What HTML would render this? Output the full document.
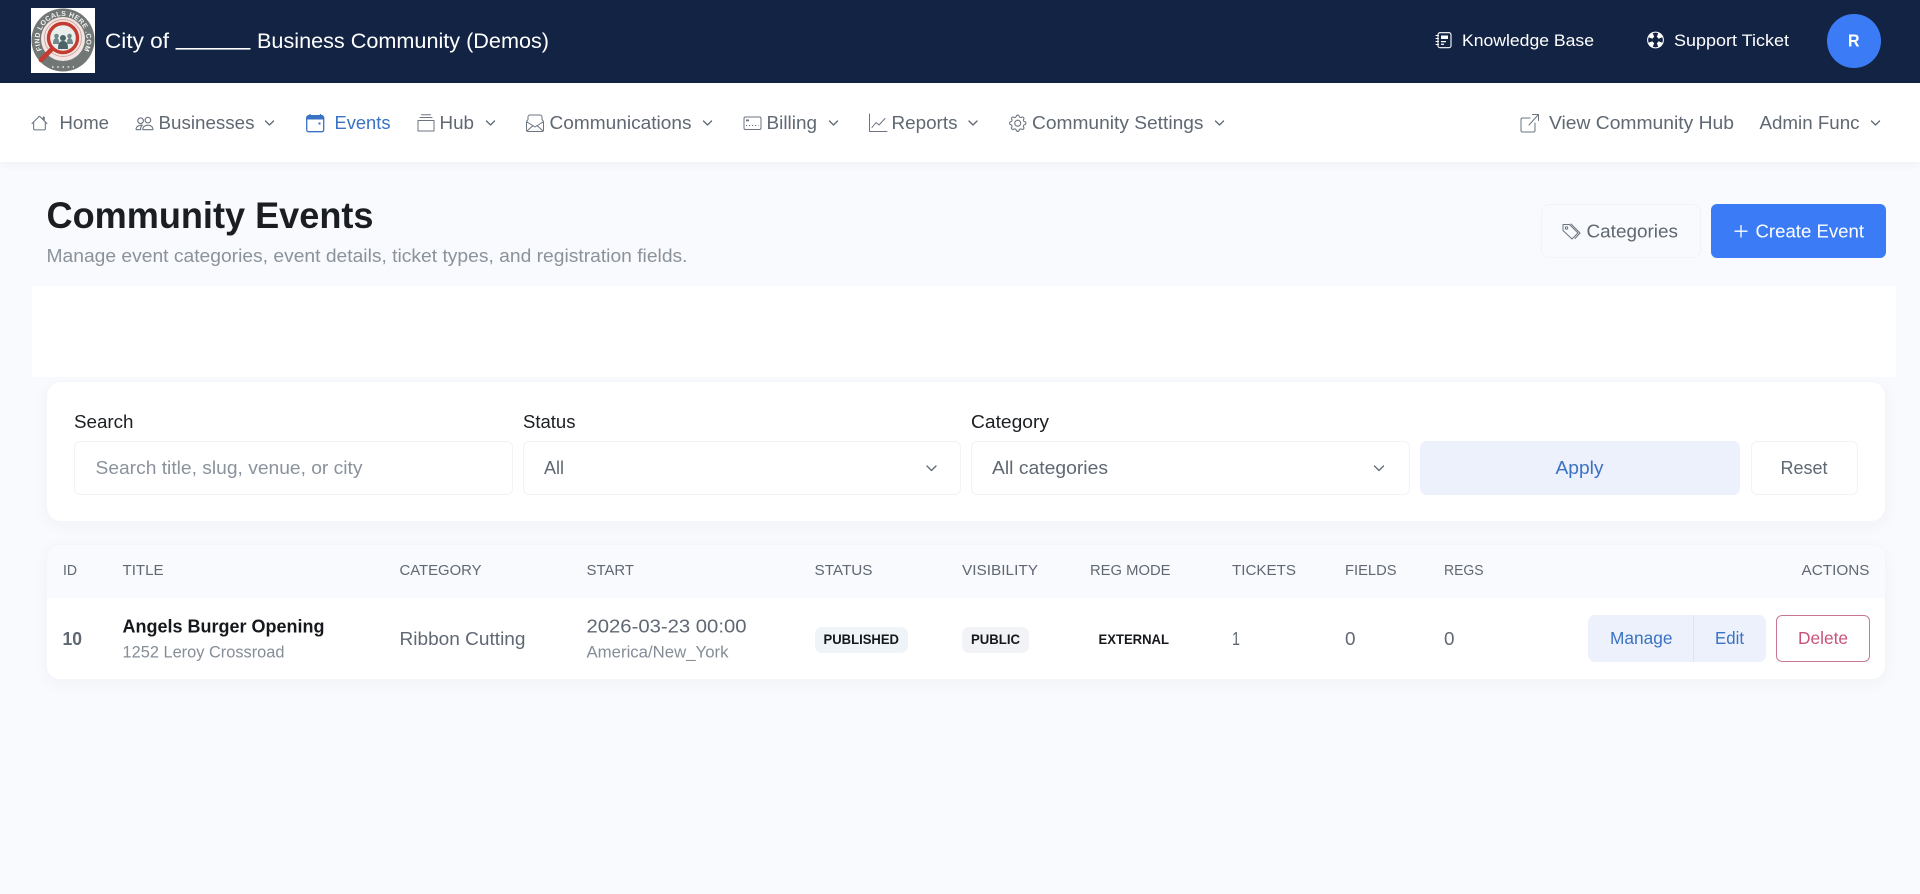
<!DOCTYPE html>
<html lang="en"><head><meta charset="utf-8"><title>Community Events</title>
<style>
html,body{margin:0;padding:0;width:1920px;height:894px;overflow:hidden;background:#f9fafd;font-family:"Liberation Sans",sans-serif}
.b{position:absolute;box-sizing:border-box}
svg.o{position:absolute;left:0;top:0}
text{font-family:"Liberation Sans",sans-serif}
.nav{font-size:18.5px;fill:#5f6873}
.hd{font-size:15.2px;fill:#5f6873}
.t18{font-size:18.5px;fill:#5f6873}
.lb{font-size:18.5px;fill:#1b1e22}
.bd{font-size:14px;font-weight:700;fill:#15181c}
.ic{fill:none;stroke:#6b7480;stroke-width:1;stroke-linecap:round;stroke-linejoin:round}
.ch{fill:none;stroke:#5f6873;stroke-width:1.3;stroke-linecap:round;stroke-linejoin:round}
</style></head><body>
<div class="b" style="left:0;top:0;width:1920px;height:83px;background:#132343"></div>
<div class="b" style="left:0;top:83px;width:1920px;height:79px;background:#fff;box-shadow:0 2px 8px rgba(30,50,90,.05)"></div>
<div class="b" style="left:1827px;top:14px;width:54px;height:54px;border-radius:50%;background:#3b7cf6"></div>
<div class="b" style="left:1541px;top:204px;width:160px;height:54px;border-radius:8px;border:1px solid #f1f3f6;background:#f9fafd"></div>
<div class="b" style="left:1711px;top:204px;width:175px;height:54px;border-radius:6px;background:#3b7cf6"></div>
<div class="b" style="left:32px;top:286px;width:1864px;height:91px;background:#fff"></div>
<div class="b" style="left:46px;top:381px;width:1840px;height:141px;border-radius:15px;background:#fff;border:1px solid #f3f5f9;box-shadow:0 4px 16px rgba(30,50,90,.04)"></div>
<div class="b" style="left:74px;top:441px;width:439px;height:54px;border-radius:6px;border:1px solid #f1f3f6;background:#fff"></div>
<div class="b" style="left:523px;top:441px;width:438px;height:54px;border-radius:6px;border:1px solid #f1f3f6;background:#fff"></div>
<div class="b" style="left:971px;top:441px;width:439px;height:54px;border-radius:6px;border:1px solid #f1f3f6;background:#fff"></div>
<div class="b" style="left:1420px;top:441px;width:320px;height:54px;border-radius:7px;background:#ecf1fb"></div>
<div class="b" style="left:1751px;top:441px;width:107px;height:54px;border-radius:6px;border:1px solid #f1f3f6;background:#fff"></div>
<div class="b" style="left:46px;top:544px;width:1840px;height:136px;border-radius:14px;background:#fff;overflow:hidden;border:1px solid #f3f5f9;box-shadow:0 4px 16px rgba(30,50,90,.04)">
  <div style="height:53px;background:#f9fafd"></div>
</div>
<div class="b" style="left:815px;top:627px;width:93px;height:26px;border-radius:7px;background:#eef4f8"></div>
<div class="b" style="left:962px;top:627px;width:67px;height:26px;border-radius:7px;background:#f1f3f6"></div>
<div class="b" style="left:1588px;top:615px;width:106px;height:47px;border-radius:7px 0 0 7px;background:#ecf1fb;border-right:1px solid #dfe5f0"></div>
<div class="b" style="left:1694px;top:615px;width:72px;height:47px;border-radius:0 7px 7px 0;background:#ecf1fb"></div>
<div class="b" style="left:1776px;top:615px;width:94px;height:47px;border-radius:6px;border:1px solid #c9788f;background:#fff"></div>

<svg class="o" width="1920" height="894" viewBox="0 0 1920 894" xmlns="http://www.w3.org/2000/svg">
<!-- logo -->
<rect x="31" y="8" width="64" height="65" fill="#fff"/>
<circle cx="63" cy="40" r="31.5" fill="#707775"/>
<circle cx="63" cy="39" r="22" fill="#f1e6e3"/>
<circle cx="63" cy="38" r="18.5" fill="none" stroke="#d9a6a0" stroke-width="1"/>
<circle cx="63" cy="38" r="14.5" fill="#e9edec" stroke="#c33b31" stroke-width="3.4"/>
<path d="M52 49 41 60" stroke="#c33b31" stroke-width="4.6" stroke-linecap="round"/>
<circle cx="63" cy="38" r="3" fill="#4b6468"/><path d="M58 49c0-6 1.500-8 5-8s5 2 5 8z" fill="#4b6468"/>
<circle cx="56.500" cy="36" r="2.300" fill="#71888b"/><circle cx="69.500" cy="36" r="2.300" fill="#71888b"/>
<path d="M53 44c0-4 1-6 3.500-6s2.500 2 2.500 6zM67 44c0-4 .5-6 2.500-6s3.500 2 3.500 6z" fill="#71888b"/>
<defs><path id="arc" d="M42 50A23.500 23.500 0 1 1 84 50"/></defs>
<text font-size="7" font-weight="700" fill="#f4f4f2" letter-spacing=".35"><textPath href="#arc">FIND LOCALS HERE .COM</textPath></text>
<path d="M52 67h22" stroke="#e8e8e6" stroke-width="1.600" stroke-dasharray="1.600 3.600"/>

<!-- header text -->
<text x="105" y="48" font-size="21.500" fill="#fff" textLength="64" lengthAdjust="spacingAndGlyphs">City of</text>
<rect x="175.500" y="48" width="75" height="1.600" fill="#fff"/>
<text x="257" y="48" font-size="21.500" fill="#fff" textLength="292" lengthAdjust="spacingAndGlyphs">Business Community (Demos)</text>
<text x="1462" y="46" font-size="16.500" fill="#fff" textLength="132" lengthAdjust="spacingAndGlyphs">Knowledge Base</text>
<text x="1674" y="46" font-size="16.500" fill="#fff" textLength="115" lengthAdjust="spacingAndGlyphs">Support Ticket</text>
<text x="1848" y="46.500" font-size="17.500" font-weight="700" fill="#fff" textLength="11.500" lengthAdjust="spacingAndGlyphs">R</text>
<!-- knowledge icon -->
<g fill="none" stroke="#fff" stroke-width="1.100" stroke-linecap="round" stroke-linejoin="round">
<rect x="1438" y="32.700" width="13" height="15" rx="2"/>
<path d="M1436 35.500h2.500M1436 38.500h2.500M1436 41.500h2.500M1436 44.500h2.500"/>
</g>
<path d="M1441 35.500h7v3.500h-7zM1441 41h5v1.300h-5zM1441 43.600h3v1.300h-3z" fill="#fff"/>
<!-- life preserver -->
<circle cx="1655.500" cy="40" r="8.400" fill="#fff"/>
<circle cx="1655.500" cy="40" r="3.300" fill="#132343"/>
<g fill="#132343">
<path id="lp" d="M1654.260 36.940 1652.760 33.230A7.300 7.300 0 0 1 1658.240 33.230L1656.740 36.940Z"/>
<path d="M1654.260 36.940 1652.760 33.230A7.300 7.300 0 0 1 1658.240 33.230L1656.740 36.940Z" transform="rotate(90 1655.500 40)"/>
<path d="M1654.260 36.940 1652.760 33.230A7.300 7.300 0 0 1 1658.240 33.230L1656.740 36.940Z" transform="rotate(180 1655.500 40)"/>
<path d="M1654.260 36.940 1652.760 33.230A7.300 7.300 0 0 1 1658.240 33.230L1656.740 36.940Z" transform="rotate(270 1655.500 40)"/>
</g>

<!-- nav icons -->
<g fill="#6b7480">
<path transform="translate(31 114.500) scale(1.060)" d="M8.707 1.500a1 1 0 0 0-1.414 0L.646 8.146a.5.5 0 0 0 .708.708L2 8.207V13.500A1.500 1.500 0 0 0 3.500 15h9a1.500 1.500 0 0 0 1.500-1.500V8.207l.646.647a.5.5 0 0 0 .708-.708L13 5.793V2.500a.5.5 0 0 0-.5-.5h-1a.5.5 0 0 0-.5.5v1.293L8.707 1.500ZM13 7.207V13.500a.5.5 0 0 1-.5.5h-9a.5.5 0 0 1-.5-.5V7.207l5-5 5 5Z"/>
<path transform="translate(135.500 114.500) scale(1.125)" d="M15 14s1 0 1-1-1-4-5-4-5 3-5 4 1 1 1 1h8Zm-7.978-1A.261.261 0 0 1 7 12.996c.001-.264.167-1.030.76-1.720C8.312 10.629 9.282 10 11 10c1.717 0 2.687.630 3.240 1.276.593.690.758 1.457.760 1.720l-.008.002a.274.274 0 0 1-.014.002H7.022ZM11 7a2 2 0 1 0 0-4 2 2 0 0 0 0 4Zm3-2a3 3 0 1 1-6 0 3 3 0 0 1 6 0ZM6.936 9.280a5.880 5.880 0 0 0-1.230-.247A7.350 7.350 0 0 0 5 9c-4 0-5 3-5 4 0 .667.333 1 1 1h4.216A2.238 2.238 0 0 1 5 13c0-1.010.377-2.042 1.090-2.904.243-.294.526-.569.846-.816ZM4.920 10A5.493 5.493 0 0 0 4 13H1c0-.260.164-1.030.760-1.724.545-.636 1.492-1.256 3.160-1.275ZM1.500 5.500a3 3 0 1 1 6 0 3 3 0 0 1-6 0Zm3-2a2 2 0 1 0 0 4 2 2 0 0 0 0-4Z"/>
<g transform="translate(1009 114.500) scale(1.090)">
<path d="M8 4.754a3.246 3.246 0 1 0 0 6.492 3.246 3.246 0 0 0 0-6.492zM5.754 8a2.246 2.246 0 1 1 4.492 0 2.246 2.246 0 0 1-4.492 0z"/>
<path d="M9.796 1.343c-.527-1.790-3.065-1.790-3.592 0l-.094.319a.873.873 0 0 1-1.255.520l-.292-.160c-1.640-.892-3.433.902-2.540 2.541l.159.292a.873.873 0 0 1-.520 1.255l-.319.094c-1.790.527-1.790 3.065 0 3.592l.319.094a.873.873 0 0 1 .520 1.255l-.160.292c-.892 1.640.901 3.434 2.541 2.540l.292-.159a.873.873 0 0 1 1.255.520l.094.319c.527 1.790 3.065 1.790 3.592 0l.094-.319a.873.873 0 0 1 1.255-.520l.292.160c1.640.893 3.434-.902 2.540-2.541l-.159-.292a.873.873 0 0 1 .520-1.255l.319-.094c1.790-.527 1.790-3.065 0-3.592l-.319-.094a.873.873 0 0 1-.520-1.255l.160-.292c.893-1.640-.902-3.433-2.541-2.540l-.292.159a.873.873 0 0 1-1.255-.520l-.094-.319zm-2.633.283c.246-.835 1.428-.835 1.674 0l.094.319a1.873 1.873 0 0 0 2.693 1.115l.291-.160c.764-.415 1.600.420 1.184 1.185l-.159.292a1.873 1.873 0 0 0 1.116 2.692l.318.094c.835.246.835 1.428 0 1.674l-.319.094a1.873 1.873 0 0 0-1.115 2.693l.160.291c.415.764-.420 1.600-1.185 1.184l-.291-.159a1.873 1.873 0 0 0-2.693 1.116l-.094.318c-.246.835-1.428.835-1.674 0l-.094-.319a1.873 1.873 0 0 0-2.692-1.115l-.292.160c-.764.415-1.600-.420-1.184-1.185l.159-.291A1.873 1.873 0 0 0 1.945 8.930l-.319-.094c-.835-.246-.835-1.428 0-1.674l.319-.094A1.873 1.873 0 0 0 3.060 4.377l-.160-.292c-.415-.764.420-1.600 1.185-1.184l.292.159a1.873 1.873 0 0 0 2.692-1.115l.094-.319z"/>
</g>
</g>
<g class="ic">
<path d="M418 120.500h16v10.500h-16zM420 117.500h12M421.500 114.800h9"/>
<path d="M526.500 122c0-1 .5-1.500 1.500-2.300V117a2 2 0 0 1 2-2h10a2 2 0 0 1 2 2v2.700c1 .8 1.500 1.300 1.500 2.300v8a1.500 1.500 0 0 1-1.500 1.500h-14a1.500 1.500 0 0 1-1.500-1.500zM527 122l8 5 8-5M527 131l6-5.500M543 131l-6-5.500"/>
<rect x="744" y="117" width="17" height="12.500" rx="1.500"/>
<path d="M869.500 114v17.500h17.500M872 127.500l4-5 3 2.500 6-6.500"/>
<path d="M1530 118h-7.500a1.500 1.500 0 0 0-1.500 1.500v11a1.500 1.500 0 0 0 1.500 1.500h11a1.500 1.500 0 0 0 1.500-1.500V123M1529 125l9.500-10.500M1532.500 114.500h6v6"/>
</g>
<path d="M746 119.500h3v1.800h-3z" fill="#6b7480"/><path d="M746 125.500h1.200M749 125.500h1.200M752 125.500h1.200M755 125.500h1.200M758 125.500h.5" stroke="#6b7480" stroke-width="1"/>
<!-- events icon -->
<rect x="306.700" y="115.700" width="17" height="16" rx="2" fill="none" stroke="#3a72c4" stroke-width="1.300"/>
<path d="M306.700 119.500v-1.800a2 2 0 0 1 2-2h13a2 2 0 0 1 2 2v1.800z" fill="#3a72c4"/>
<path d="M310 114v2M320.500 114v2" stroke="#3a72c4" stroke-width="1.300"/>
<rect x="318.500" y="122.500" width="2" height="2" fill="#3a72c4"/>

<!-- nav text -->
<text class="nav" x="59.500" y="129" textLength="49.500" lengthAdjust="spacingAndGlyphs">Home</text>
<text class="nav" x="158.500" y="129" textLength="96" lengthAdjust="spacingAndGlyphs">Businesses</text>
<text class="nav" x="334.500" y="129" textLength="56" lengthAdjust="spacingAndGlyphs" style="fill:#3a72c4">Events</text>
<text class="nav" x="439.500" y="129" textLength="34.500" lengthAdjust="spacingAndGlyphs">Hub</text>
<text class="nav" x="549.500" y="129" textLength="142" lengthAdjust="spacingAndGlyphs">Communications</text>
<text class="nav" x="766.500" y="129" textLength="50.500" lengthAdjust="spacingAndGlyphs">Billing</text>
<text class="nav" x="891.500" y="129" textLength="66" lengthAdjust="spacingAndGlyphs">Reports</text>
<text class="nav" x="1032" y="129" textLength="171.500" lengthAdjust="spacingAndGlyphs">Community Settings</text>
<text class="nav" x="1549" y="129" textLength="185" lengthAdjust="spacingAndGlyphs">View Community Hub</text>
<text class="nav" x="1759.500" y="129" textLength="100" lengthAdjust="spacingAndGlyphs">Admin Func</text>
<g class="ch">
<path d="M265.500 121l4 4 4-4M486.500 121l4 4 4-4M703.500 121l4 4 4-4M829.500 121l4 4 4-4M969 121l4 4 4-4M1215.500 121l4 4 4-4M1871.500 121l4 4 4-4"/>
<path d="M927 466l4.500 4.500 4.500-4.500M1374.500 466l4.500 4.500 4.500-4.500"/>
</g>

<!-- heading -->
<text x="46.500" y="228" font-size="37.500" font-weight="700" fill="#1a1d21" textLength="327" lengthAdjust="spacingAndGlyphs">Community Events</text>
<text x="46.500" y="262" font-size="18.500" fill="#8a929c" textLength="641" lengthAdjust="spacingAndGlyphs">Manage event categories, event details, ticket types, and registration fields.</text>
<g class="ic">
<path d="M1563 224.500h6.500l8.500 8.500-6 6-9-8.500zM1571 224l9 9-5 5.500"/>
<circle cx="1566.500" cy="228" r="1.200"/>
</g>
<text class="t18" x="1586.500" y="237.500" textLength="91.500" lengthAdjust="spacingAndGlyphs">Categories</text>
<path d="M1741 225v12.500M1734.500 231.200h13" stroke="#fff" stroke-width="1.300" fill="none"/>
<text x="1755.500" y="237.500" font-size="18.500" fill="#fff" textLength="108.500" lengthAdjust="spacingAndGlyphs">Create Event</text>

<!-- filters -->
<text class="lb" x="74" y="428" textLength="59.500" lengthAdjust="spacingAndGlyphs">Search</text>
<text class="lb" x="523" y="428" textLength="52.500" lengthAdjust="spacingAndGlyphs">Status</text>
<text class="lb" x="971" y="428" textLength="78" lengthAdjust="spacingAndGlyphs">Category</text>
<text x="95.500" y="474" font-size="18.500" fill="#8a929c" textLength="267" lengthAdjust="spacingAndGlyphs">Search title, slug, venue, or city</text>
<text class="t18" x="544" y="474" textLength="20" lengthAdjust="spacingAndGlyphs">All</text>
<text class="t18" x="992" y="474" textLength="116" lengthAdjust="spacingAndGlyphs">All categories</text>
<text x="1555.500" y="474" font-size="18.500" fill="#3a72c4" textLength="48" lengthAdjust="spacingAndGlyphs">Apply</text>
<text class="t18" x="1780.500" y="474" textLength="47" lengthAdjust="spacingAndGlyphs">Reset</text>

<!-- table head -->
<g class="hd">
<text x="63" y="575" textLength="14" lengthAdjust="spacingAndGlyphs">ID</text>
<text x="122.500" y="575" textLength="41" lengthAdjust="spacingAndGlyphs">TITLE</text>
<text x="399.500" y="575" textLength="82" lengthAdjust="spacingAndGlyphs">CATEGORY</text>
<text x="586.500" y="575" textLength="47.500" lengthAdjust="spacingAndGlyphs">START</text>
<text x="814.500" y="575" textLength="58" lengthAdjust="spacingAndGlyphs">STATUS</text>
<text x="962" y="575" textLength="76" lengthAdjust="spacingAndGlyphs">VISIBILITY</text>
<text x="1090" y="575" textLength="80.500" lengthAdjust="spacingAndGlyphs">REG MODE</text>
<text x="1232" y="575" textLength="64" lengthAdjust="spacingAndGlyphs">TICKETS</text>
<text x="1345" y="575" textLength="51.500" lengthAdjust="spacingAndGlyphs">FIELDS</text>
<text x="1444" y="575" textLength="39.500" lengthAdjust="spacingAndGlyphs">REGS</text>
<text x="1801.500" y="575" textLength="68" lengthAdjust="spacingAndGlyphs">ACTIONS</text>
</g>

<!-- row -->
<text x="62.500" y="645" font-size="18.500" font-weight="700" fill="#5f6873" textLength="19.500" lengthAdjust="spacingAndGlyphs">10</text>
<text x="122.500" y="632.500" font-size="18.500" font-weight="700" fill="#15181c" textLength="202" lengthAdjust="spacingAndGlyphs">Angels Burger Opening</text>
<text x="122.500" y="657.500" font-size="16.500" fill="#858d97" textLength="162" lengthAdjust="spacingAndGlyphs">1252 Leroy Crossroad</text>
<text class="t18" x="399.500" y="645" textLength="126" lengthAdjust="spacingAndGlyphs">Ribbon Cutting</text>
<text class="t18" x="586.500" y="632.500" textLength="160" lengthAdjust="spacingAndGlyphs">2026-03-23 00:00</text>
<text x="586.500" y="657.500" font-size="16.500" fill="#858d97" textLength="142" lengthAdjust="spacingAndGlyphs">America/New_York</text>
<text class="bd" x="823.500" y="644" textLength="75.500" lengthAdjust="spacingAndGlyphs">PUBLISHED</text>
<text class="bd" x="971" y="644" textLength="49" lengthAdjust="spacingAndGlyphs">PUBLIC</text>
<text class="bd" x="1098.500" y="644" textLength="70.500" lengthAdjust="spacingAndGlyphs">EXTERNAL</text>
<text class="t18" x="1232" y="645" textLength="8" lengthAdjust="spacingAndGlyphs">1</text>
<text class="t18" x="1345" y="645" textLength="10.500" lengthAdjust="spacingAndGlyphs">0</text>
<text class="t18" x="1444" y="645" textLength="10.500" lengthAdjust="spacingAndGlyphs">0</text>
<text x="1610" y="644" font-size="17.500" fill="#3a72c4" textLength="62.500" lengthAdjust="spacingAndGlyphs">Manage</text>
<text x="1715" y="644" font-size="17.500" fill="#3a72c4" textLength="29" lengthAdjust="spacingAndGlyphs">Edit</text>
<text x="1798" y="644" font-size="17.500" fill="#c8527a" textLength="50" lengthAdjust="spacingAndGlyphs">Delete</text>
</svg>
</body></html>
